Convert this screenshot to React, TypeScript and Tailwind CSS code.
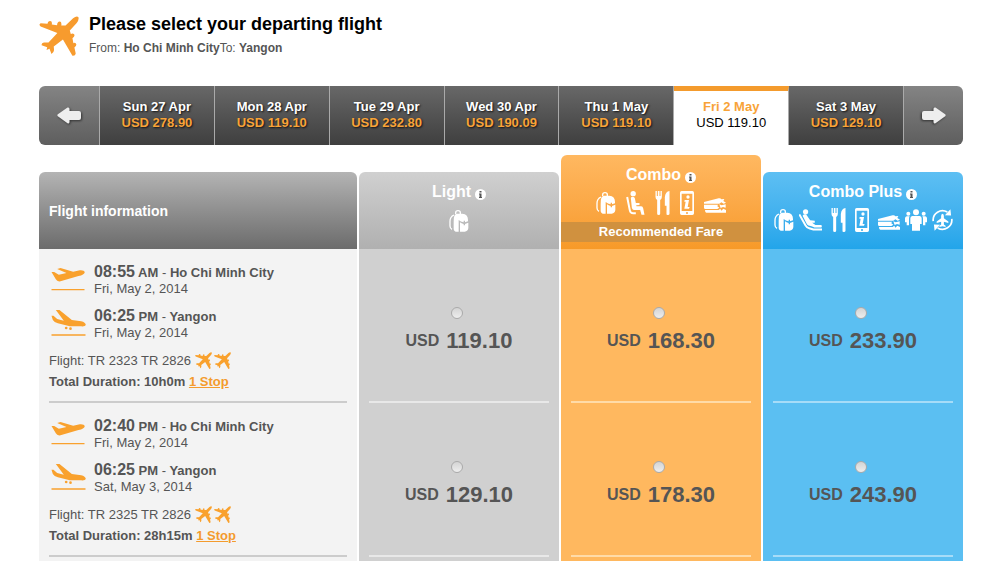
import React, { useState } from "react";

type IconProps = { className?: string };

const days = [
  { date: "Sun 27 Apr", price: "USD 278.90" },
  { date: "Mon 28 Apr", price: "USD 119.10" },
  { date: "Tue 29 Apr", price: "USD 232.80" },
  { date: "Wed 30 Apr", price: "USD 190.09" },
  { date: "Thu 1 May", price: "USD 119.10" },
  { date: "Fri 2 May", price: "USD 119.10" },
  { date: "Sat 3 May", price: "USD 129.10" },
];

const flights = [
  {
    id: "TR2323",
    depart: { time: "08:55", half: "AM", city: "Ho Chi Minh City", date: "Fri, May 2, 2014" },
    arrive: { time: "06:25", half: "PM", city: "Yangon", date: "Fri, May 2, 2014" },
    numbers: "TR 2323 TR 2826",
    duration: "10h0m",
    prices: ["119.10", "168.30", "233.90"],
  },
  {
    id: "TR2325",
    depart: { time: "02:40", half: "PM", city: "Ho Chi Minh City", date: "Fri, May 2, 2014" },
    arrive: { time: "06:25", half: "PM", city: "Yangon", date: "Sat, May 3, 2014" },
    numbers: "TR 2325 TR 2826",
    duration: "28h15m",
    prices: ["129.10", "178.30", "243.90"],
  },
];

const fares = [
  { name: "Light", cell: "bg-[#d0d0d0]", line: "border-[#e8e8e8]" },
  { name: "Combo", cell: "bg-[#ffb85f]", line: "border-[#ffdba8]" },
  { name: "Combo Plus", cell: "bg-[#5bbff2]", line: "border-[#a6dcf8]" },
];

function PlaneIcon({ className }: IconProps) {
  return (
    <svg viewBox="11 16 122 122" className={className} fill="currentColor" aria-hidden="true">
      <path d="M131 19Q134 27 126 37L105 60L108 71Q114 67 118 72T113 84L116 99Q121 96 124 101T119 112L123 130Q122 138 113 137L84 88L56 109L57 120Q56 129 49 132L43 116L34 120L36 111L19 105Q18 99 26 97L40 97L67 68L16 48Q9 43 16 38L37 40Q38 31 45 31T50 42L66 44Q67 33 74 33T79 45L92 45L115 23Q125 15 131 19Z" />
    </svg>
  );
}

function TakeoffIcon() {
  return (
    <svg viewBox="0 0 104 72" className="h-6 w-[35px]" fill="currentColor" aria-hidden="true">
      <path d="M1 15L9 15L23 23L46 18L18 6L28 3L66 14L86 10Q99 9 101 15Q99 24 82 27L28 43Q18 45 14 37Z" />
      <path d="M1 66h99v4H1z" />
    </svg>
  );
}

function LandingIcon() {
  return (
    <svg viewBox="0 0 104 84" className="h-[28px] w-[35px]" fill="currentColor" aria-hidden="true">
      <path d="M1 20L7 20L18 30L38 35L14 3L25 3L62 33L90 37Q103 40 104 48Q102 53 90 52L56 52L20 43Q9 40 5 33Z" />
      <circle cx="45" cy="57" r="4" />
      <circle cx="58" cy="59" r="4" />
      <path d="M1 76h102v4H1z" />
    </svg>
  );
}

function BackpackIcon() {
  return (
    <svg viewBox="0 0 60 66" className="h-[22px] w-5" fill="none" stroke="currentColor" aria-hidden="true">
      <path d="M20 12V8Q20 2 27 2T34 8V12" strokeWidth="4" />
      <path d="M15 15Q3 20 3 34V48Q3 55 9 58" strokeWidth="4" />
      <path d="M14 36Q13 11 25 11H40Q57 12 57 30V34L48 37V32H44V37Q35 36 29 30V65H20Q15 64 14 58Z" fill="currentColor" stroke="none" />
      <path d="M33 37Q37 41 44 42V46H48V42L58 38V54Q57 64 47 65H33Z" fill="currentColor" stroke="none" />
    </svg>
  );
}

function SeatIcon() {
  return (
    <svg viewBox="0 0 56 72" className="h-6 w-[19px]" fill="none" stroke="currentColor" strokeLinejoin="round" aria-hidden="true">
      <circle cx="21" cy="8" r="8" fill="currentColor" stroke="none" />
      <path d="M3 18L11 58Q13 67 21 67H29" strokeWidth="6" />
      <path d="M14 21Q15 17 20 17T26 22L29 36H40V42L30 43L31 46H45Q50 46 51 52L55 71H46L42 57H23Q18 56 17 50Z" fill="currentColor" stroke="none" />
    </svg>
  );
}

function ReclineIcon() {
  return (
    <svg viewBox="0 0 70 66" className="h-[22px] w-[23px]" fill="none" stroke="currentColor" strokeLinejoin="round" aria-hidden="true">
      <circle cx="20" cy="8" r="8" fill="currentColor" stroke="none" />
      <path d="M1 16L20 50Q24 57 31 58L44 62H70" strokeWidth="6" />
      <path d="M11 20Q15 14 22 16L34 34L48 35V41H40L50 48H68Q71 53 68 56H47L38 52L29 50Q25 48 23 44Z" fill="currentColor" stroke="none" />
    </svg>
  );
}

function CutleryIcon({ className }: IconProps) {
  return (
    <svg viewBox="0 0 44 72" className={`h-6 w-[15px] ${className ?? ""}`} fill="currentColor" aria-hidden="true">
      <path d="M1 0H5V15H8V0H13V15H16V0H20V18Q20 24 15 27V68Q15 72 10.500 72T6 68V27Q1 24 1 18Z" />
      <path d="M43 0V68Q43 72 38 72T34 68V44H29V18Q31 2 43 0Z" />
    </svg>
  );
}

function PhoneIcon({ className }: IconProps) {
  return (
    <svg viewBox="0 0 42 72" className={`h-6 w-3.5 ${className ?? ""}`} fill="currentColor" aria-hidden="true">
      <path fillRule="evenodd" d="M5 0H37Q42 0 42 5V67Q42 72 37 72H5Q0 72 0 67V5Q0 0 5 0ZM5 8V60H37V8ZM18 64V68H24V64Z" />
      <circle cx="24" cy="18" r="5" />
      <path d="M14 27H27L23 48H29L27 53H13L17 32H13Z" />
    </svg>
  );
}

function TicketsIcon() {
  return (
    <svg viewBox="0 0 66 45" className="mt-1 h-[15px] w-[22px]" fill="currentColor" aria-hidden="true">
      <path d="M0 12L44 1Q50 0 52 4L61 3L58 9L66 14L59 17L52 13L46 17H0Z" />
      <path d="M0 20H42L40 25L46 29L40 33H4Q0 33 0 29Z" />
      <path d="M3 36H44L49 32L52 38L58 32L66 36V44H7Q3 44 3 36Z" />
      <path d="M46 19L53 22L65 19V29L57 27L50 30Z" />
    </svg>
  );
}

function GroupIcon() {
  return (
    <svg viewBox="0 0 66 64" className="h-[22px] w-[22px]" fill="currentColor" aria-hidden="true">
      <circle cx="33" cy="9" r="9" />
      <circle cx="10" cy="13" r="6" />
      <circle cx="56" cy="13" r="6" />
      <path d="M22 20H44Q50 21 50 27V44H45V64H21V44H16V27Q16 21 22 20Z" />
      <path d="M5 21H14Q12 24 12 28V48H5V39H0V27Q0 22 5 21ZM52 21H61Q66 22 66 27V39H61V48H54V28Q54 24 52 21Z" />
    </svg>
  );
}

function ChangeFlightIcon() {
  return (
    <svg viewBox="0 0 60 64" className="h-[22px] w-[21px]" fill="none" stroke="currentColor" aria-hidden="true">
      <path d="M3 35A27 27 0 0 1 44 9M57 29A27 27 0 0 1 16 55" strokeWidth="5" />
      <path d="M37 18L55 19L53 1ZM23 46L5 45L7 63Z" fill="currentColor" stroke="none" />
      <path d="M30 14Q34 15 34 20V27L47 36V41L34 37V45L39 49V52L30 50L21 52V49L26 45V37L13 41V36L26 27V20Q26 15 30 14Z" fill="currentColor" stroke="none" />
    </svg>
  );
}

function ArrowIcon({ className }: IconProps) {
  return (
    <svg viewBox="0 0 24 17" className={`h-[17px] w-6 text-[#eee] drop-shadow-[1px_1px_1px_#333] ${className ?? ""}`} fill="currentColor" aria-hidden="true">
      <path d="M.5 7.500Q0 8.500 .8 9.200L10.500 16.200Q12.500 17 12.500 15V13H22Q24 13 24 11V6Q24 4 22 4H12.500V2Q12.500 0 10.500 .6Z" />
    </svg>
  );
}

function FareTitle({ name }: { name: string }) {
  return (
    <div className="flex h-5 items-center justify-center gap-1 text-base font-bold">
      <span>{name}</span>
      <button aria-label={`About ${name}`} className="mt-1 flex h-[11px] w-[11px] items-center justify-center rounded-full bg-white">
        <svg viewBox="0 0 11 11" className="h-[11px] w-[11px]" fill="#555" aria-hidden="true">
          <path d="M4.500 2H6.500V3.500H4.500ZM4 4.500H6.500V8H7V9H4V8H4.500V5.500H4Z" />
        </svg>
      </button>
    </div>
  );
}

type Stop = { time: string; half: string; city: string; date: string };

function Leg({ stop, icon }: { stop: Stop; icon: React.ReactNode }) {
  return (
    <div className="flex h-11 gap-2">
      <div className="flex w-[37px] justify-end text-[#f9a12d]">{icon}</div>
      <div>
        <div className="text-[13px] leading-[18px] font-bold">
          <span className="text-base leading-[18px]">{stop.time}</span> {stop.half} <span className="font-normal">-</span> {stop.city}
        </div>
        <div className="text-[13px] leading-[13px]">{stop.date}</div>
      </div>
    </div>
  );
}

function App() {
  const [day, setDay] = useState(5);
  const [choice, setChoice] = useState("");

  return (
    <main className="h-screen overflow-hidden bg-white pr-[41px] pl-[39px] font-['Liberation_Sans',Arial,sans-serif] text-[#555]">
      <header className="flex h-[86px] gap-2.5 pt-3.5">
        <PlaneIcon className="h-11 w-10 text-[#f79b2e]" />
        <div>
          <h1 className="text-lg leading-5 font-bold text-black">Please select your departing flight</h1>
          <p className="mt-1.5 text-xs leading-4">
            From: <b>Ho Chi Minh City</b>To: <b>Yangon</b>
          </p>
        </div>
      </header>

      <nav aria-label="Departure dates" className="flex h-[59px] overflow-hidden rounded-md">
        <button aria-label="Earlier dates" className="flex w-[61px] items-center justify-center border-r border-[#aaa] bg-linear-to-b from-[#848484] to-[#5e5e5e]">
          <ArrowIcon />
        </button>
        {days.map((d, i) => (
          <button
            key={d.date}
            onClick={() => setDay(i)}
            className={
              i === day
                ? "flex-1 border-t-[5px] border-r border-t-[#f49b2d] border-r-[#aaa] bg-white pb-[7px] text-[13px] leading-4 text-black"
                : "flex-1 border-r border-[#aaa] bg-linear-to-b from-[#686868] to-[#3f3f3f] pb-0.5 text-[13px] leading-4 font-bold text-[#f8a338] text-shadow-[1px_1px_2px_#111]"
            }
          >
            <span className={i === day ? "block font-bold text-[#f8a338]" : "block text-white"}>{d.date}</span>
            <span className="block">{d.price}</span>
          </button>
        ))}
        <button aria-label="Later dates" className="flex w-[59px] items-center justify-center bg-linear-to-b from-[#848484] to-[#5e5e5e]">
          <ArrowIcon className="-scale-x-100" />
        </button>
      </nav>

      <table className="mt-2.5 w-full table-fixed border-separate border-spacing-0">
        <colgroup>
          <col />
          <col className="w-[202px]" />
          <col className="w-[202px]" />
          <col className="w-[202px]" />
        </colgroup>
        <thead className="text-white">
          <tr>
            <th className="p-0 text-left align-bottom">
              <div className="flex h-[77px] items-center rounded-t-md bg-linear-to-b from-[#b4b4b4] to-[#6c6c6c] px-2.5 text-sm">Flight information</div>
            </th>
            <th className="p-0 pl-0.5 align-bottom">
              <div className="h-[77px] rounded-t-md bg-linear-to-b from-[#d0d0d0] to-[#b0b0b0] pt-2.5">
                <FareTitle name="Light" />
                <div className="mt-2 flex justify-center"><BackpackIcon /></div>
              </div>
            </th>
            <th className="p-0 pl-0.5 align-bottom">
              <div className="h-[94px] rounded-t-md bg-linear-to-b from-[#ffb860] to-[#f79a28] pt-2.5">
                <FareTitle name="Combo" />
                <div className="mt-1.5 flex items-center justify-center gap-2.5">
                  <BackpackIcon />
                  <SeatIcon />
                  <CutleryIcon />
                  <PhoneIcon />
                  <TicketsIcon />
                </div>
                <div className="mt-[7px] bg-[#d0913f] text-[13px] leading-5">Recommended Fare</div>
              </div>
            </th>
            <th className="p-0 pl-0.5 align-bottom">
              <div className="h-[77px] rounded-t-md bg-linear-to-b from-[#5dbff3] to-[#22a5ea] pt-2.5">
                <FareTitle name="Combo Plus" />
                <div className="mt-1.5 flex items-center justify-center gap-[5px]">
                  <BackpackIcon />
                  <ReclineIcon />
                  <CutleryIcon className="mx-1" />
                  <PhoneIcon className="mr-1" />
                  <TicketsIcon />
                  <GroupIcon />
                  <ChangeFlightIcon />
                </div>
              </div>
            </th>
          </tr>
        </thead>
        <tbody>
          {flights.map((f) => (
            <tr key={f.id}>
              <td className="bg-[#f3f3f3] px-2.5 py-0">
                <div className="h-[154px] border-b-2 border-[#ccc] pt-3.5">
                  <Leg stop={f.depart} icon={<div className="pt-1"><TakeoffIcon /></div>} />
                  <Leg stop={f.arrive} icon={<div className="pt-0.5"><LandingIcon /></div>} />
                  <div className="flex h-[19px] items-center text-[13px]">
                    Flight: {f.numbers}
                    <PlaneIcon className="ml-1 h-[17px] w-[17px] text-[#f9a12d]" />
                    <PlaneIcon className="ml-0.5 h-[17px] w-[17px] text-[#f9a12d]" />
                  </div>
                  <div className="mt-0.5 text-[13px] leading-5 font-bold">
                    Total Duration: {f.duration}{" "}
                    <a href="#stops" className="text-[#f49b2d] underline">1 Stop</a>
                  </div>
                </div>
              </td>
              {fares.map((fare, i) => (
                <td key={fare.name} className={`border-l-2 border-white px-2.5 py-0 ${fare.cell}`}>
                  <label className={`flex h-[154px] flex-col items-center border-b-2 pt-[58px] ${fare.line}`}>
                    <input
                      type="radio"
                      name="fare"
                      checked={choice === f.id + fare.name}
                      onChange={() => setChoice(f.id + fare.name)}
                      className="mr-1 h-3 w-3 appearance-none rounded-full border border-[#aaa] bg-linear-to-b from-[#d4d4d4] to-[#eee] checked:bg-[#555]"
                    />
                    <span className="mt-2.5 flex gap-[7px] font-bold">
                      <span className="text-base leading-6">USD</span>
                      <span className="text-[22px] leading-6">{f.prices[i]}</span>
                    </span>
                  </label>
                </td>
              ))}
            </tr>
          ))}
        </tbody>
        <tfoot>
          <tr>
            <td className="h-3 bg-[#f3f3f3] p-0" />
            {fares.map((fare) => (
              <td key={fare.name} className={`h-3 border-l-2 border-white p-0 ${fare.cell}`} />
            ))}
          </tr>
        </tfoot>
      </table>
    </main>
  );
}

export default App;
